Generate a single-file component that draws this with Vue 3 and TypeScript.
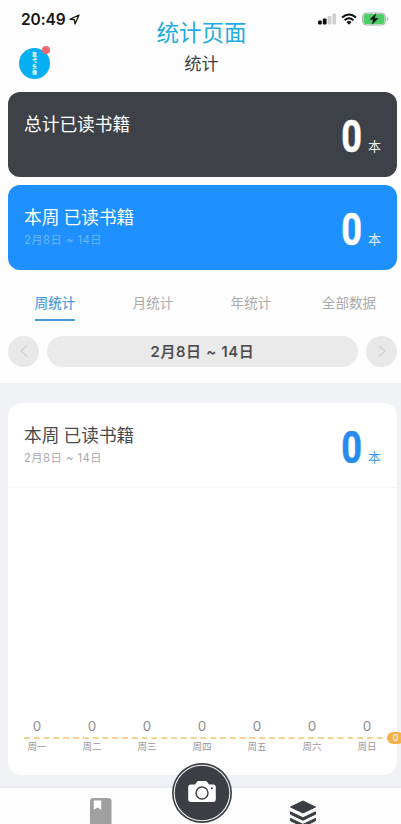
<script setup lang="ts">
interface Day {
  label: string
  count: number
}

const tabs: string[] = ['周统计', '月统计', '年统计', '全部数据']
const activeTab = tabs[0]
const range = '2月8日 ~ 14日'
const days: Day[] = ['一', '二', '三', '四', '五', '六', '日'].map((d) => ({ label: '周' + d, count: 0 }))
const avatarText: string[] = ['氪', '弋', '头', '像']
</script>

<template>
  <div class="screen">
    <section class="top">
      <header class="header">
        <div class="left">
          <div class="clock">
            <span>20:49</span>
            <svg width="11" height="11" viewBox="0 0 11 11">
              <path d="M1 5.3 10 1 6 10 5.4 5.7Z" fill="none" stroke="#161616" stroke-width="1.3" stroke-linejoin="round" />
            </svg>
          </div>
          <div class="avatar">
            <span v-for="c in avatarText" :key="c">{{ c }}</span>
            <i class="dot"></i>
          </div>
        </div>
        <div class="titles">
          <h1>统计页面</h1>
          <h2>统计</h2>
        </div>
        <div class="status">
          <svg width="18" height="12" viewBox="0 0 18 12">
            <rect x="0" y="7.5" width="3.8" height="4" rx="1" fill="#111" />
            <rect x="4.8" y="5.5" width="3.8" height="6" rx="1" fill="#111" />
            <rect x="9.6" y="3" width="3.8" height="8.5" rx="1" fill="#d0d0d0" />
            <rect x="14.4" y="0.5" width="3.6" height="11" rx="1" fill="#d0d0d0" />
          </svg>
          <svg width="16" height="12" viewBox="0 0 16 12">
            <path d="M1 4.5Q8-1.6 15 4.5M3.6 7.2Q8 3.4 12.4 7.2" fill="none" stroke="#111" stroke-width="2" />
            <path d="M5.4 9Q8 6.9 10.6 9L8 11.7Z" fill="#111" />
          </svg>
          <svg width="27" height="14" viewBox="0 0 27 14">
            <rect x="0.5" y="1" width="23" height="12" rx="3.8" fill="#d5ecd7" stroke="#adb4ae" />
            <rect x="1.6" y="2" width="20.8" height="10" rx="2.8" fill="#4fce67" />
            <path d="M25 5v4q1.5-.6 1.5-2T25 5Z" fill="#adb4ae" />
            <path d="M13.8 1.8 7.8 7.6H11.2L10.2 12.2 16.2 6.3h-3.6Z" fill="#111" stroke="#111" stroke-width=".4" />
          </svg>
        </div>
      </header>

      <div class="cards">
        <article class="card dark">
          <div class="info"><h3>总计已读书籍</h3></div>
          <div class="total"><b>0</b><span>本</span></div>
        </article>
        <article class="card blue">
          <div class="info">
            <h3>本周 已读书籍</h3>
            <p>{{ range }}</p>
          </div>
          <div class="total"><b>0</b><span>本</span></div>
        </article>
      </div>

      <nav class="tabs">
        <span v-for="t in tabs" :key="t" :class="{ active: t === activeTab }">{{ t }}</span>
      </nav>

      <div class="picker">
        <button class="arrow">
          <svg width="10" height="14" viewBox="0 0 10 14"><path d="M8 1.5 2 7l6 5.5" /></svg>
        </button>
        <div class="range">{{ range }}</div>
        <button class="arrow">
          <svg width="10" height="14" viewBox="0 0 10 14"><path d="M2 1.5 8 7l-6 5.5" /></svg>
        </button>
      </div>
    </section>

    <section class="panel">
      <div class="card plain">
        <div class="info">
          <h3>本周 已读书籍</h3>
          <p>{{ range }}</p>
        </div>
        <div class="total"><b>0</b><span>本</span></div>
      </div>
      <div class="chart">
        <div class="row counts"><span v-for="d in days" :key="d.label">{{ d.count }}</span></div>
        <div class="baseline">
          <svg width="365" height="2"><path d="M0 1H365" stroke="#efc577" stroke-width="1.3" stroke-dasharray="6 3.8" /></svg>
          <em>0</em>
        </div>
        <div class="row labels"><span v-for="d in days" :key="d.label">{{ d.label }}</span></div>
      </div>
    </section>

    <footer class="bar">
      <svg class="book" width="22" height="26" viewBox="0 0 22 26">
        <rect width="21.5" height="32" rx="3.2" fill="#a0a0a0" />
        <path d="M3.8 2.6h7.4v9.2L7.5 9.6 3.8 11.8Z" fill="#fff" />
      </svg>
      <div class="camera">
        <svg width="60" height="60" viewBox="0 0 60 60">
          <circle cx="30" cy="30" r="30" fill="#3b3f45" />
          <circle cx="30" cy="30" r="27.8" fill="none" stroke="#f5f5f5" stroke-width="1.1" />
          <path d="M19 21.5h4l2-2.8q.5-.7 1.4-.7h7.2q.9 0 1.4.7l2 2.8h4q2.8 0 2.8 2.8v11.9q0 2.8-2.8 2.8H19q-2.8 0-2.8-2.8V24.3q0-2.8 2.8-2.8Z" fill="#fff" />
          <circle cx="30" cy="30" r="6" fill="#fff" stroke="#3b3f45" stroke-width="1.4" />
          <circle cx="39.8" cy="25.3" r="1" fill="#3b3f45" />
        </svg>
      </div>
      <svg class="layers" width="28" height="24" viewBox="0 0 28 24">
        <path d="M14 1 26.5 7 14 13 1.5 7Z" fill="#3a3d43" stroke="#3a3d43" stroke-linejoin="round" />
        <path d="M1.5 11.8 14 17.8l12.5-6v2.4L14 20.2 1.5 14.2ZM1.5 18.4 14 24.4l12.5-6v2.4L14 26.8 1.5 20.8Z" fill="#3a3d43" stroke="#3a3d43" stroke-linejoin="round" />
      </svg>
    </footer>
  </div>
</template>

<style>
body {
  margin: 0;
  overflow: hidden;
}
</style>

<style scoped>
* {
  box-sizing: border-box;
}
.screen {
  width: 401px;
  height: 824px;
  overflow: hidden;
  display: flex;
  flex-direction: column;
  background: #f1f2f5;
  font-family: Inter, 'Noto Sans CJK SC', sans-serif;
  color: #4a4a4c;
}
h1,
h2,
h3,
p {
  margin: 0;
  font-weight: 400;
  white-space: nowrap;
}
.top {
  height: 383px;
  background: #fefefe;
}
.header {
  height: 92px;
  display: grid;
  grid-template-columns: 140px 1fr 140px;
}
.left {
  padding: 9px 0 0 19px;
}
.clock {
  display: flex;
  align-items: center;
  gap: 3px;
  height: 20px;
  padding-left: 2px;
  font-size: 15.5px;
  font-weight: 600;
  letter-spacing: -0.1px;
  color: #161616;
}
.avatar {
  position: relative;
  width: 31px;
  height: 31px;
  margin-top: 19px;
  padding-bottom: 1px;
  border-radius: 50%;
  background: #05aff2;
  color: #fff;
  display: flex;
  flex-direction: column;
  align-items: center;
  justify-content: center;
  font-size: 5px;
  line-height: 6px;
  font-weight: 700;
}
.dot {
  position: absolute;
  top: -2px;
  right: 0;
  width: 8px;
  height: 8px;
  border-radius: 50%;
  background: #f0696f;
}
.titles {
  text-align: center;
  padding-top: 17px;
}
.titles h1 {
  padding-left: 2px;
  font-size: 22.5px;
  line-height: 32px;
  color: #22acdf;
}
.titles h2 {
  margin-top: 2px;
  padding-left: 2px;
  font-size: 17.3px;
  line-height: 25px;
  color: #404040;
}
.status {
  display: flex;
  align-items: center;
  justify-content: flex-end;
  gap: 5px;
  height: 14px;
  margin: 12px 12.5px 0 0;
}
.cards {
  padding: 0 4px 0 8px;
  display: flex;
  flex-direction: column;
  gap: 7.5px;
}
.card {
  height: 85px;
  display: flex;
  justify-content: space-between;
  padding: 19px 16px 0;
  border-radius: 12px;
}
.dark {
  background: #3e4248;
  color: #fff;
}
.blue {
  background: #1e90ff;
  color: #fff;
}
h3 {
  font-size: 17.7px;
  line-height: 27px;
  word-spacing: -0.8px;
}
.info p {
  font-size: 11.3px;
  line-height: 19px;
  letter-spacing: 0.45px;
  color: #a9a9ab;
}
.blue .info p {
  color: #6fb8fd;
}
.total {
  display: flex;
  align-items: baseline;
  gap: 6px;
  height: 50px;
}
.total b {
  font: 700 43.5px/54px Roboto, sans-serif;
  transform: scaleX(0.83);
  transform-origin: right;
  -webkit-text-stroke: 0.5px currentColor;
}
.total span {
  font-size: 13px;
  font-weight: 400;
  transform: translateY(-1px);
  opacity: 0.88;
}
.tabs {
  display: grid;
  grid-template-columns: repeat(4, 98px);
  padding: 22px 0 0 6px;
}
.tabs span {
  justify-self: center;
  height: 29px;
  font-size: 13.6px;
  line-height: 23px;
  color: #aaa;
}
.tabs .active {
  color: #469bdd;
  -webkit-text-stroke: 0.2px currentColor;
  border-bottom: 2px solid #469bdd;
}
.picker {
  display: flex;
  gap: 8px;
  padding: 15px 4px 0 8px;
}
.arrow {
  width: 31px;
  height: 31px;
  padding: 0;
  border: 0;
  border-radius: 50%;
  background: #e9e8e9;
  display: flex;
  align-items: center;
  justify-content: center;
}
.arrow path {
  fill: none;
  stroke: #cfcfcf;
  stroke-width: 1.3;
}
.range {
  flex: 1;
  border-radius: 16px;
  background: #ebeaeb;
  text-align: center;
  font-size: 15px;
  line-height: 32px;
  height: 31px;
  font-weight: 500;
  letter-spacing: 0.6px;
  -webkit-text-stroke: 0.2px currentColor;
}
.panel {
  height: 372px;
  margin: 20px 4px 0 8px;
  border-radius: 14px;
  background: #fff;
  display: flex;
  flex-direction: column;
}
.plain {
  border-bottom: 1px solid #f6f6f7;
  border-radius: 0;
}
.plain .total {
  color: #268bea;
}
.chart {
  flex: 1;
  display: flex;
  flex-direction: column;
  justify-content: flex-end;
  padding-bottom: 21px;
}
.row {
  display: grid;
  grid-template-columns: repeat(7, 55px);
  padding-left: 1.5px;
  text-align: center;
}
.counts {
  font-size: 13.5px;
  line-height: 20px;
  color: #8d8d8f;
}
.baseline {
  position: relative;
  height: 2px;
  margin: 1px 0 0 15.5px;
  display: flex;
}
.baseline em {
  position: absolute;
  left: 363.5px;
  top: -5px;
  width: 17px;
  height: 12px;
  border-radius: 6px;
  background: #f3b24c;
  color: #fff;
  font-size: 9px;
  line-height: 12px;
  font-style: normal;
  text-align: center;
}
.labels {
  font-size: 9.5px;
  line-height: 15px;
  color: #98989a;
}
.bar {
  position: relative;
  margin-top: 13px;
  height: 36px;
  display: flex;
  background: #fdfdfe;
  box-shadow: 0 -1px 4px #e4e6ea;
}
.book {
  margin: 10px 0 0 90px;
}
.camera {
  position: absolute;
  left: 172px;
  top: -25px;
  width: 60px;
  height: 60px;
}
.layers {
  margin: 12px 0 0 177px;
}
</style>
